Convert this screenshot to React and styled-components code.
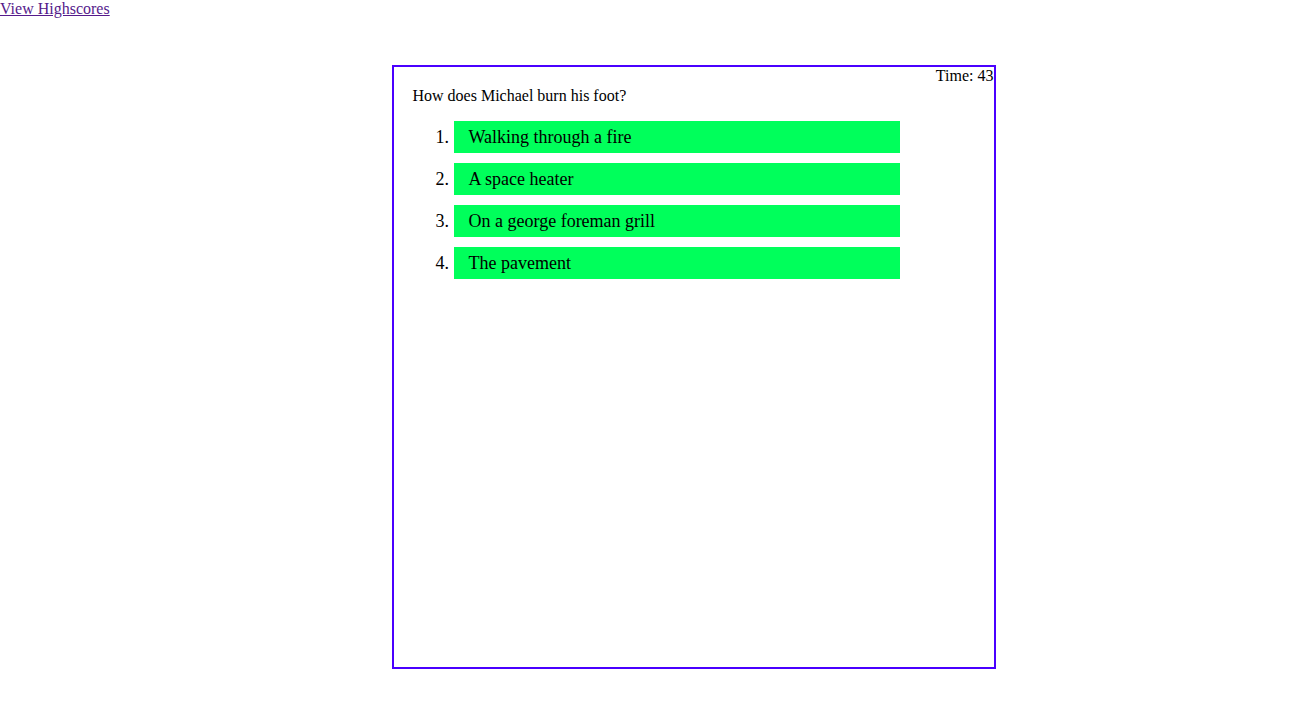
import React from "react";
import styled, { createGlobalStyle } from "styled-components";

const GlobalStyle = createGlobalStyle`
  body {
    margin: 0;
    font-family: "Liberation Serif", "Times New Roman", serif;
    font-size: 16px;
    color: #000;
    background: #fff;
  }
`;

const HighscoreLink = styled.a`
  display: inline-block;
  color: #551a8b;
  text-decoration: underline;
  line-height: 18px;
`;

const Stage = styled.div`
  display: flex;
  justify-content: center;
  padding-top: 47px;
  padding-left: 80px;
`;

const QuizBox = styled.div`
  position: relative;
  box-sizing: border-box;
  width: 604px;
  height: 604px;
  border: 2px solid #4a00ff;
  padding: 18px 19px;
`;

const Timer = styled.div`
  position: absolute;
  top: 0;
  right: 0;
  line-height: 18px;
`;

const Question = styled.p`
  margin: 0;
  padding-top: 2px;
  line-height: 18px;
`;

const Choices = styled.ol`
  margin: 16px 0 0;
  padding-left: 41px;
  font-size: 18px;
`;

const Choice = styled.li`
  width: 431px;
  height: 32px;
  line-height: 33px;
  padding-left: 15px;
  margin-bottom: 10px;
  background: #00ff5b;
  cursor: pointer;
`;

const answers = [
  "Walking through a fire",
  "A space heater",
  "On a george foreman grill",
  "The pavement",
];

export default function App() {
  return (
    <>
      <GlobalStyle />
      <HighscoreLink href="#">View Highscores</HighscoreLink>
      <Stage>
        <QuizBox>
          <Timer>Time: 43</Timer>
          <Question>How does Michael burn his foot?</Question>
          <Choices>
            {answers.map((a) => (
              <Choice key={a}>{a}</Choice>
            ))}
          </Choices>
        </QuizBox>
      </Stage>
    </>
  );
}
